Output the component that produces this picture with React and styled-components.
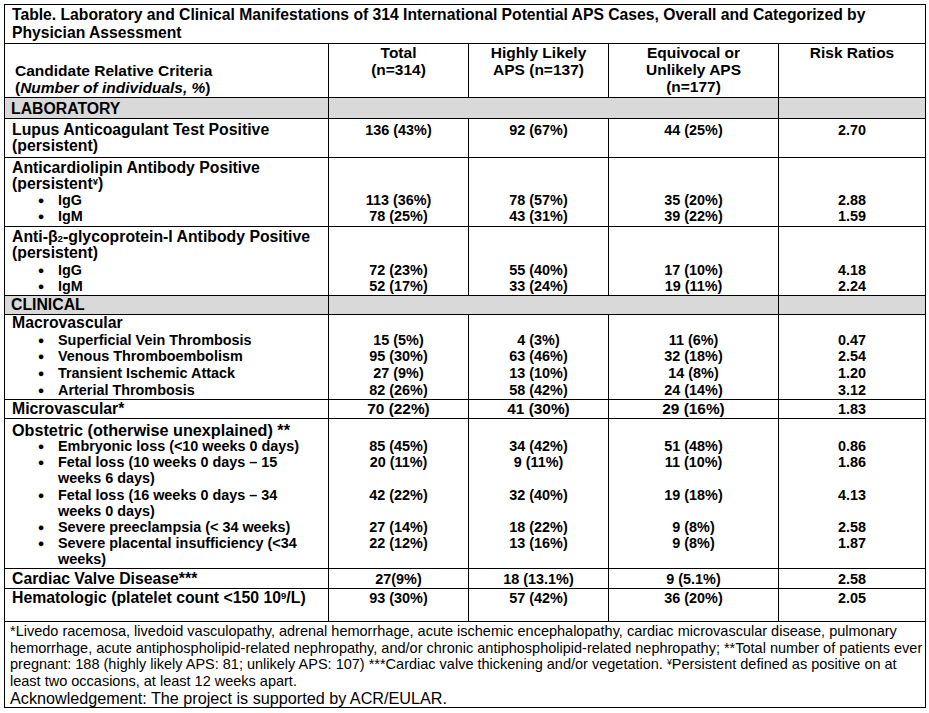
import React from 'react';
import styled, { createGlobalStyle } from 'styled-components';

const GlobalStyle = createGlobalStyle`
  html, body {
    margin: 0;
    padding: 0;
    background: #fff;
  }
  body {
    font-family: "Liberation Sans", Arial, sans-serif;
    color: #000;
  }
`;

// styles
const Page = styled.div`
  padding: 4px 0 0 4px;
`;

const Table = styled.table`
  width: 921px;
  border-collapse: collapse;
  table-layout: fixed;
`;

const Row = styled.tr`
  height: ${(p) => p.$h}px;
`;

const Cell = styled.td`
  border: 1px solid #000;
  padding: ${(p) => p.$pt ?? 2}px 4px 0 ${(p) => (p.$center ? 4 : 7)}px;
  vertical-align: ${(p) => p.$valign || 'top'};
  text-align: ${(p) => (p.$center ? 'center' : 'left')};
  font-weight: bold;
  font-size: 14px;
  line-height: 1;
  white-space: nowrap;
  overflow: hidden;
`;

const TitleCell = styled(Cell)`
  padding: 1px 4px 0 7px;
  font-size: 15.7px;
  line-height: 17.5px;
`;

const HeadCell = styled(Cell)`
  padding: 0 4px 1px ${(p) => (p.$center ? 4 : 10)}px;
  font-size: 15.5px;
`;

const HeadLine = styled.div`
  line-height: 17px;

  em {
    font-style: italic;
  }
`;

const SectionCell = styled(Cell)`
  background: #d9d9d9;
  padding: ${(p) => p.$pt ?? 0}px 4px 0 6px;
  font-size: 15.8px;
  line-height: 18px;
`;

const LabelLine = styled.div`
  display: flex;
  align-items: center;
  height: ${(p) => p.$lh}px;
  line-height: ${(p) => p.$lh}px;
  font-size: ${(p) => p.$size || (p.$kind === 'label' ? 15.8 : 14.4)}px;
  padding-left: ${(p) => (p.$kind === 'label' ? 0 : p.$kind === 'item' ? 24 : 46)}px;
`;

const Bullet = styled.span`
  width: 10px;
  margin-right: 12px;
  font-size: 11px;
  text-align: center;
`;

const ValueLine = styled.div`
  height: ${(p) => p.$lh}px;
  line-height: ${(p) => p.$lh}px;
  font-size: ${(p) => (p.$big ? 15.4 : 14.4)}px;
`;

const Sup = styled.sup`
  font-size: 0.6em;
  line-height: 0;
  vertical-align: 0.45em;
`;

const Sub = styled.sub`
  font-size: 0.62em;
  line-height: 0;
  vertical-align: -0.05em;
`;

const NoteCell = styled.td`
  border: 1px solid #000;
  padding: 1px 4px 0 5px;
  vertical-align: top;
  white-space: nowrap;
  font-size: 14px;
  line-height: 1;
`;

const NoteLine = styled.div`
  height: 16.7px;
  font-size: 14.5px;
  line-height: 16.7px;
`;

const AckLine = styled.div`
  height: 17px;
  font-size: 16.2px;
  line-height: 17px;
`;

// data
const L = (c, size) => ({ k: 'label', c, size });
const I = (c) => ({ k: 'item', c });
const C = (c) => ({ k: 'cont', c });

const rows = [
  { section: 'LABORATORY', h: 21, pt: 2 },
  {
    h: 39, pt: 3, lh: 16,
    lines: [L('Lupus Anticoagulant Test Positive'), L('(persistent)')],
    vals: [['136 (43%)'], ['92 (67%)'], ['44 (25%)'], ['2.70']],
  },
  {
    h: 69, pt: 2, lh: 16,
    lines: [
      L('Anticardiolipin Antibody Positive'),
      L(<>(persistent<Sup>¥</Sup>)</>),
      I('IgG'),
      I('IgM'),
    ],
    vals: [
      [null, null, '113 (36%)', '78 (25%)'],
      [null, null, '78 (57%)', '43 (31%)'],
      [null, null, '35 (20%)', '39 (22%)'],
      [null, null, '2.88', '1.59'],
    ],
  },
  {
    h: 69, pt: 2, lh: 16.4,
    lines: [
      L(<>Anti-β<Sub>2</Sub>-glycoprotein-I Antibody Positive</>),
      L('(persistent)'),
      I('IgG'),
      I('IgM'),
    ],
    vals: [
      [null, null, '72 (23%)', '52 (17%)'],
      [null, null, '55 (40%)', '33 (24%)'],
      [null, null, '17 (10%)', '19 (11%)'],
      [null, null, '4.18', '2.24'],
    ],
  },
  { section: 'CLINICAL', h: 19, pt: 0 },
  {
    h: 85, pt: 0, lh: 16.7,
    lines: [
      L('Macrovascular'),
      I('Superficial Vein Thrombosis'),
      I('Venous Thromboembolism'),
      I('Transient Ischemic Attack'),
      I('Arterial Thrombosis'),
    ],
    vals: [
      [null, '15 (5%)', '95 (30%)', '27 (9%)', '82 (26%)'],
      [null, '4 (3%)', '63 (46%)', '13 (10%)', '58 (42%)'],
      [null, '11 (6%)', '32 (18%)', '14 (8%)', '24 (14%)'],
      [null, '0.47', '2.54', '1.20', '3.12'],
    ],
  },
  {
    h: 19, pt: 0, lh: 18, big: [true, true, true, false],
    lines: [L('Microvascular*')],
    vals: [['70 (22%)'], ['41 (30%)'], ['29 (16%)'], ['1.83']],
  },
  {
    h: 150, pt: 3, lh: 16.2, firstLh: 16,
    lines: [
      L('Obstetric (otherwise unexplained) **', 16.2),
      I('Embryonic loss (<10 weeks 0 days)'),
      I('Fetal loss (10 weeks 0 days – 15'),
      C('weeks 6 days)'),
      I('Fetal loss (16 weeks 0 days – 34'),
      C('weeks 0 days)'),
      I('Severe preeclampsia (< 34 weeks)'),
      I('Severe placental insufficiency (<34'),
      C('weeks)'),
    ],
    vals: [
      [null, '85 (45%)', '20 (11%)', null, '42 (22%)', null, '27 (14%)', '22 (12%)', null],
      [null, '34 (42%)', '9 (11%)', null, '32 (40%)', null, '18 (22%)', '13 (16%)', null],
      [null, '51 (48%)', '11 (10%)', null, '19 (18%)', null, '9 (8%)', '9 (8%)', null],
      [null, '0.86', '1.86', null, '4.13', null, '2.58', '1.87', null],
    ],
  },
  {
    h: 20, pt: 1, lh: 18,
    lines: [L('Cardiac Valve Disease***')],
    vals: [['27(9%)'], ['18 (13.1%)'], ['9 (5.1%)'], ['2.58']],
  },
  {
    h: 33, pt: 0, lh: 18,
    lines: [L(<>Hematologic (platelet count &lt;150 10<Sup>9</Sup>/L)</>)],
    vals: [['93 (30%)'], ['57 (42%)'], ['36 (20%)'], ['2.05']],
  },
];

const notes = [
  '*Livedo racemosa, livedoid vasculopathy, adrenal hemorrhage, acute ischemic encephalopathy, cardiac microvascular disease, pulmonary',
  'hemorrhage, acute antiphospholipid-related nephropathy, and/or chronic antiphospholipid-related nephropathy; **Total number of patients ever',
  <>pregnant: 188 (highly likely APS: 81; unlikely APS: 107) ***Cardiac valve thickening and/or vegetation. <Sup>¥</Sup>Persistent defined as positive on at</>,
  'least two occasions, at least 12 weeks apart.',
];

const lineHeight = (row, i) => (i === 0 && row.firstLh ? row.firstLh : row.lh);

const App = () => {
  return (
    <>
      <GlobalStyle />
      <Page>
        <Table>
          <colgroup>
            <col style={{ width: 324 }} />
            <col style={{ width: 140 }} />
            <col style={{ width: 140 }} />
            <col style={{ width: 170 }} />
            <col style={{ width: 147 }} />
          </colgroup>
          <tbody>
            <Row $h={39}>
              <TitleCell colSpan={5}>
                Table. Laboratory and Clinical Manifestations of 314 International Potential APS Cases, Overall and Categorized by
                <br />
                Physician Assessment
              </TitleCell>
            </Row>

            <Row $h={54}>
              <HeadCell $valign="bottom">
                <HeadLine>Candidate Relative Criteria</HeadLine>
                <HeadLine>
                  (<em>Number of individuals, %</em>)
                </HeadLine>
              </HeadCell>
              <HeadCell $center>
                <HeadLine>Total</HeadLine>
                <HeadLine>(n=314)</HeadLine>
              </HeadCell>
              <HeadCell $center>
                <HeadLine>Highly Likely</HeadLine>
                <HeadLine>APS (n=137)</HeadLine>
              </HeadCell>
              <HeadCell $center>
                <HeadLine>Equivocal or</HeadLine>
                <HeadLine>Unlikely APS</HeadLine>
                <HeadLine>(n=177)</HeadLine>
              </HeadCell>
              <HeadCell $center>
                <HeadLine>Risk Ratios</HeadLine>
              </HeadCell>
            </Row>

            {rows.map((row, r) =>
              row.section ? (
                <Row $h={row.h} key={r}>
                  <SectionCell $pt={row.pt}>{row.section}</SectionCell>
                  <SectionCell colSpan={3} />
                  <SectionCell />
                </Row>
              ) : (
                <Row $h={row.h} key={r}>
                  <Cell $pt={row.pt}>
                    {row.lines.map((line, i) => (
                      <LabelLine key={i} $kind={line.k} $size={line.size} $lh={lineHeight(row, i)}>
                        {line.k === 'item' && <Bullet>●</Bullet>}
                        <span>{line.c}</span>
                      </LabelLine>
                    ))}
                  </Cell>
                  {row.vals.map((col, c) => (
                    <Cell $pt={row.pt} $center key={c}>
                      {col.map((v, i) => (
                        <ValueLine key={i} $lh={lineHeight(row, i)} $big={row.big && row.big[c]}>
                          {v || '\u00a0'}
                        </ValueLine>
                      ))}
                    </Cell>
                  ))}
                </Row>
              )
            )}

            <Row $h={86}>
              <NoteCell colSpan={5}>
                {notes.map((n, i) => (
                  <NoteLine key={i}>{n}</NoteLine>
                ))}
                <AckLine>Acknowledgement: The project is supported by ACR/EULAR.</AckLine>
              </NoteCell>
            </Row>
          </tbody>
        </Table>
      </Page>
    </>
  );
};

export default App;
